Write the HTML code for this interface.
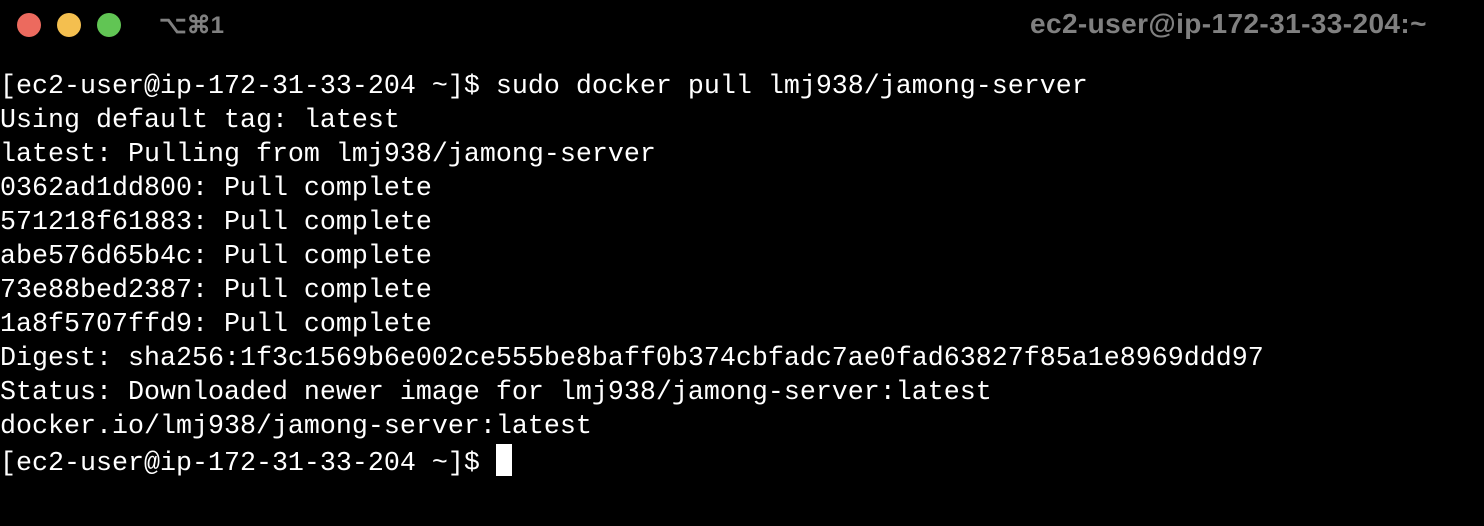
<!DOCTYPE html>
<html><head><style>
html,body{margin:0;padding:0;background:#000;width:1484px;height:526px;overflow:hidden}
.dot{position:absolute;top:13px;width:24px;height:24px;border-radius:50%}
.t{position:absolute;font-family:"Liberation Sans",sans-serif;font-weight:bold;color:#808080;font-size:24px;top:11px}
pre{position:absolute;left:0;top:70px;margin:0;font-family:"Liberation Mono",monospace;font-size:26.67px;line-height:34px;color:#fff}
.cur{display:inline-block;width:16px;height:32px;background:#fff;vertical-align:-6px}
</style></head><body>
<div class="dot" style="left:17px;background:#ec6a5e"></div>
<div class="dot" style="left:57px;background:#f4bf4f"></div>
<div class="dot" style="left:97px;background:#61c554"></div>
<div class="t" style="left:159px">⌥⌘1</div>
<div class="t" style="left:1030px;font-size:28px;letter-spacing:0.4px;top:8px">ec2-user@ip-172-31-33-204:~</div>
<pre>[ec2-user@ip-172-31-33-204 ~]$ sudo docker pull lmj938/jamong-server
Using default tag: latest
latest: Pulling from lmj938/jamong-server
0362ad1dd800: Pull complete
571218f61883: Pull complete
abe576d65b4c: Pull complete
73e88bed2387: Pull complete
1a8f5707ffd9: Pull complete
Digest: sha256:1f3c1569b6e002ce555be8baff0b374cbfadc7ae0fad63827f85a1e8969ddd97
Status: Downloaded newer image for lmj938/jamong-server:latest
docker.io/lmj938/jamong-server:latest
[ec2-user@ip-172-31-33-204 ~]$ <span class="cur"></span></pre>
</body></html>
